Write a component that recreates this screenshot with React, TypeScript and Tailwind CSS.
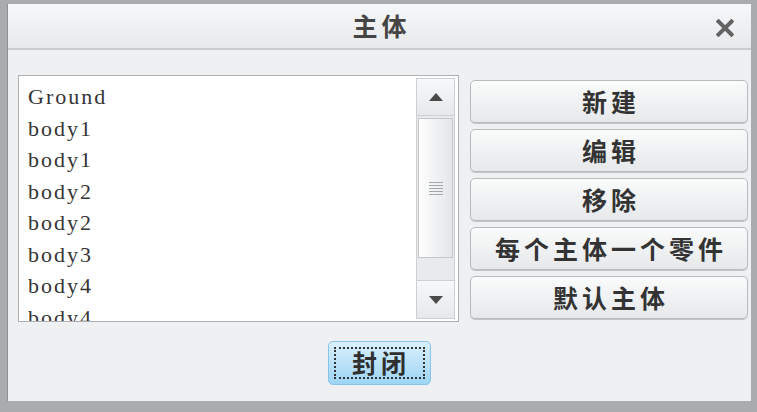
import React from 'react';

const items = ['Ground', 'body1', 'body1', 'body2', 'body2', 'body3', 'body4', 'body4'];
const actions = ['新建', '编辑', '移除', '每个主体一个零件', '默认主体'];

const cjk = "font-['Noto_Sans_CJK_SC',sans-serif]";

const App: React.FC = () => {
  return (
    <div className="w-[757px] h-[412px] bg-[#a9acaf] pt-[4px] pl-[7px] pr-[6px] pb-[11px] flex">
      <div className="flex-1 flex flex-col border-l border-[#8e9194] bg-[#eef0f2]">
        {/* Title bar */}
        <div className="relative h-[46px] shrink-0 bg-gradient-to-b from-[#f6f7f8] to-[#e7e9eb] border-b-2 border-[#c9cbce] flex items-center justify-center">
          <span className={`${cjk} text-[25px] font-bold text-[#454545] tracking-[4px] pl-[4px]`}>主体</span>
          <svg className="absolute right-[17px] top-[15px]" width="18" height="18" viewBox="0 0 18 18">
            <path d="M2.5 2.5 L15.5 15.5 M15.5 2.5 L2.5 15.5" stroke="#636363" strokeWidth="4" strokeLinecap="square" />
          </svg>
        </div>

        <div className="flex-1 flex flex-col pl-[10px] pr-[3px] pt-[25px]">
          <div className="flex gap-[11px]">
            {/* List box */}
            <div className="w-[441px] h-[247px] bg-white border border-[#aeb1b4] flex overflow-hidden">
              <div className="flex-1 pl-[9px] pt-[5px] overflow-hidden">
                {items.map((it, i) => (
                  <div key={i} className="font-['Liberation_Serif',serif] text-[22px] tracking-[2px] leading-[31.5px] text-[#353535]">
                    {it}
                  </div>
                ))}
              </div>
              {/* Scrollbar */}
              <div className="w-[39px] my-[2px] mr-[3px] flex flex-col border border-[#cdd0d2] bg-[#e8eaec]">
                <div className="h-[37px] border-b border-[#cdd0d2] bg-gradient-to-b from-[#f7f8f9] to-[#e6e8ea] flex items-center justify-center">
                  <div className="w-0 h-0 border-l-[7px] border-r-[7px] border-b-[8px] border-l-transparent border-r-transparent border-b-[#4a4a4a]" />
                </div>
                <div className="flex-1 pt-[2px] px-[1px] flex flex-col">
                  <div className="h-[140px] border border-[#c4c7ca] bg-gradient-to-r from-white to-[#e3e5e7] flex flex-col items-center justify-center gap-[2px]">
                    <div className="w-[14px] h-[1px] bg-[#a5a8ab]" />
                    <div className="w-[14px] h-[1px] bg-[#a5a8ab]" />
                    <div className="w-[14px] h-[1px] bg-[#a5a8ab]" />
                    <div className="w-[14px] h-[1px] bg-[#a5a8ab]" />
                    <div className="w-[14px] h-[1px] bg-[#a5a8ab]" />
                  </div>
                </div>
                <div className="h-[38px] border-t border-[#cdd0d2] bg-gradient-to-b from-[#f7f8f9] to-[#e6e8ea] flex items-center justify-center">
                  <div className="w-0 h-0 border-l-[7px] border-r-[7px] border-t-[8px] border-l-transparent border-r-transparent border-t-[#4a4a4a]" />
                </div>
              </div>
            </div>

            {/* Action buttons */}
            <div className="w-[278px] pt-[5px] flex flex-col gap-[6px]">
              {actions.map((a) => (
                <button
                  key={a}
                  className={`h-[43px] rounded-[5px] border border-[#b8bbbe] bg-gradient-to-b from-[#fafbfb] to-[#e6e8ea] shadow-[0_1px_0_#c3c5c8] flex items-center justify-center ${cjk} text-[25px] font-bold text-[#333] tracking-[4px] pl-[4px]`}
                >
                  {a}
                </button>
              ))}
            </div>
          </div>

          {/* Close */}
          <div className="flex justify-center pt-[19px] pr-[8px]">
            <button className="relative w-[103px] h-[44px] rounded-[5px] border border-[#86c4ec] bg-gradient-to-b from-[#d9f0fd] to-[#9dd4f5] flex items-center justify-center">
              <span className="absolute inset-[5px] border-2 border-dotted border-[#333]" />
              <span className={`${cjk} text-[25px] font-bold text-[#2f2f2f] tracking-[4px] pl-[4px]`}>封闭</span>
            </button>
          </div>
        </div>
      </div>
    </div>
  );
};

export default App;
